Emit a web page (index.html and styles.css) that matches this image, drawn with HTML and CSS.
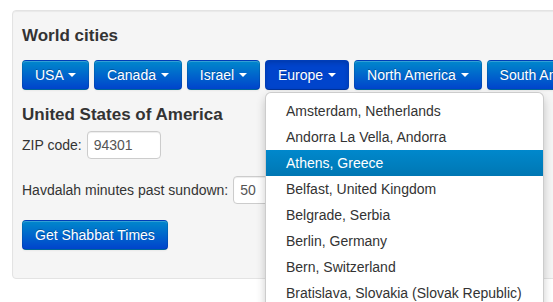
FILE: index.html
```html
<!doctype html>
<html>
<head>
<meta charset="utf-8">
<title>World cities</title>
<link rel="stylesheet" href="styles.css">
</head>
<body>
<div class="well">
	<h3 class="title">World cities</h3>
	<div class="btn-toolbar">
		<button class="btn">USA <span class="caret"></span></button>
		<button class="btn">Canada <span class="caret"></span></button>
		<button class="btn">Israel <span class="caret"></span></button>
		<div class="btn-group">
			<button class="btn open">Europe <span class="caret"></span></button>
			<ul class="dropdown-menu">
				<li><a href="#">Amsterdam, Netherlands</a></li>
				<li><a href="#">Andorra La Vella, Andorra</a></li>
				<li class="active"><a href="#">Athens, Greece</a></li>
				<li><a href="#">Belfast, United Kingdom</a></li>
				<li><a href="#">Belgrade, Serbia</a></li>
				<li><a href="#">Berlin, Germany</a></li>
				<li><a href="#">Bern, Switzerland</a></li>
				<li><a href="#">Bratislava, Slovakia (Slovak Republic)</a></li>
				<li><a href="#">Brussels, Belgium</a></li>
				<li><a href="#">Bucharest, Romania</a></li>
			</ul>
		</div>
		<button class="btn">North America <span class="caret"></span></button>
		<button class="btn">South America <span class="caret"></span></button>
	</div>

	<form class="form">
		<h3 class="title country">United States of America</h3>
		<div class="field zip">
			<label>ZIP code:</label>
			<input type="text" value="94301">
		</div>
		<div class="field havdalah">
			<label>Havdalah minutes past sundown:</label>
			<input type="text" value="50">
		</div>
		<button type="button" class="btn submit">Get Shabbat Times</button>
	</form>
</div>
</body>
</html>
```

FILE: styles.css
```css
*{box-sizing:border-box;}
html{height:100%; overflow:hidden;}
body{margin:0; min-height:100%; padding-top:10px; font:14px/20px "Liberation Sans", Arial, sans-serif; color:#333; background:#fff;}

.well{width:640px; margin:0 0 0 12px; padding:10px 9px 28px; background:#f5f5f5; border:1px solid #e3e3e3; border-radius:4px; box-shadow:inset 0 1px 1px rgba(0,0,0,.05);}
.title{margin:5px 0 14px; font-size:17px; line-height:20px; font-weight:bold; color:#333;}
.country{margin:15px 0 6px;}

.btn-toolbar{display:flex; gap:5px;}
.btn-group{position:relative;}
.btn{display:inline-block; height:30px; padding:4px 12px; font:14px/20px "Liberation Sans", Arial, sans-serif; color:#fff; white-space:nowrap;
	text-shadow:0 -1px 0 rgba(0,0,0,.25); background:#0074cc; background-image:linear-gradient(to bottom,#0088cc,#0044cc);
	border:1px solid; border-color:rgba(0,0,0,.1) rgba(0,0,0,.1) rgba(0,0,0,.25); border-radius:4px;
	box-shadow:inset 0 1px 0 rgba(255,255,255,.2), 0 1px 2px rgba(0,0,0,.05); cursor:pointer;}
.btn.open{background:#0044cc; background-image:none; box-shadow:inset 0 2px 4px rgba(0,0,0,.15), 0 1px 2px rgba(0,0,0,.05);}
.caret{display:inline-block; width:0; height:0; margin-left:1px; vertical-align:top; margin-top:8px; border-top:4px solid #fff; border-left:4px solid transparent; border-right:4px solid transparent;}

.dropdown-menu{position:absolute; top:100%; left:0; z-index:10; width:279px; margin:2px 0 0; padding:5px 0; list-style:none; background:#fff;
	border:1px solid rgba(0,0,0,.2); border-radius:6px; box-shadow:0 5px 10px rgba(0,0,0,.2);}
.dropdown-menu a{display:block; padding:3px 20px; line-height:20px; color:#333; text-decoration:none; white-space:nowrap;}
.dropdown-menu .active a{color:#fff; background:#0081c2; background-image:linear-gradient(to bottom,#0088cc,#0077b3);}

.form{margin:0;}
.field{display:flex; align-items:baseline; gap:5px;}
.havdalah{margin-top:17px;}
.field input{width:74px; height:28px; padding:4px 6px; font:14px/20px "Liberation Sans", Arial, sans-serif; color:#555; background:#fff;
	border:1px solid #ccc; border-radius:4px; box-shadow:inset 0 1px 1px rgba(0,0,0,.075);}
.submit{margin-top:16px;}
```
